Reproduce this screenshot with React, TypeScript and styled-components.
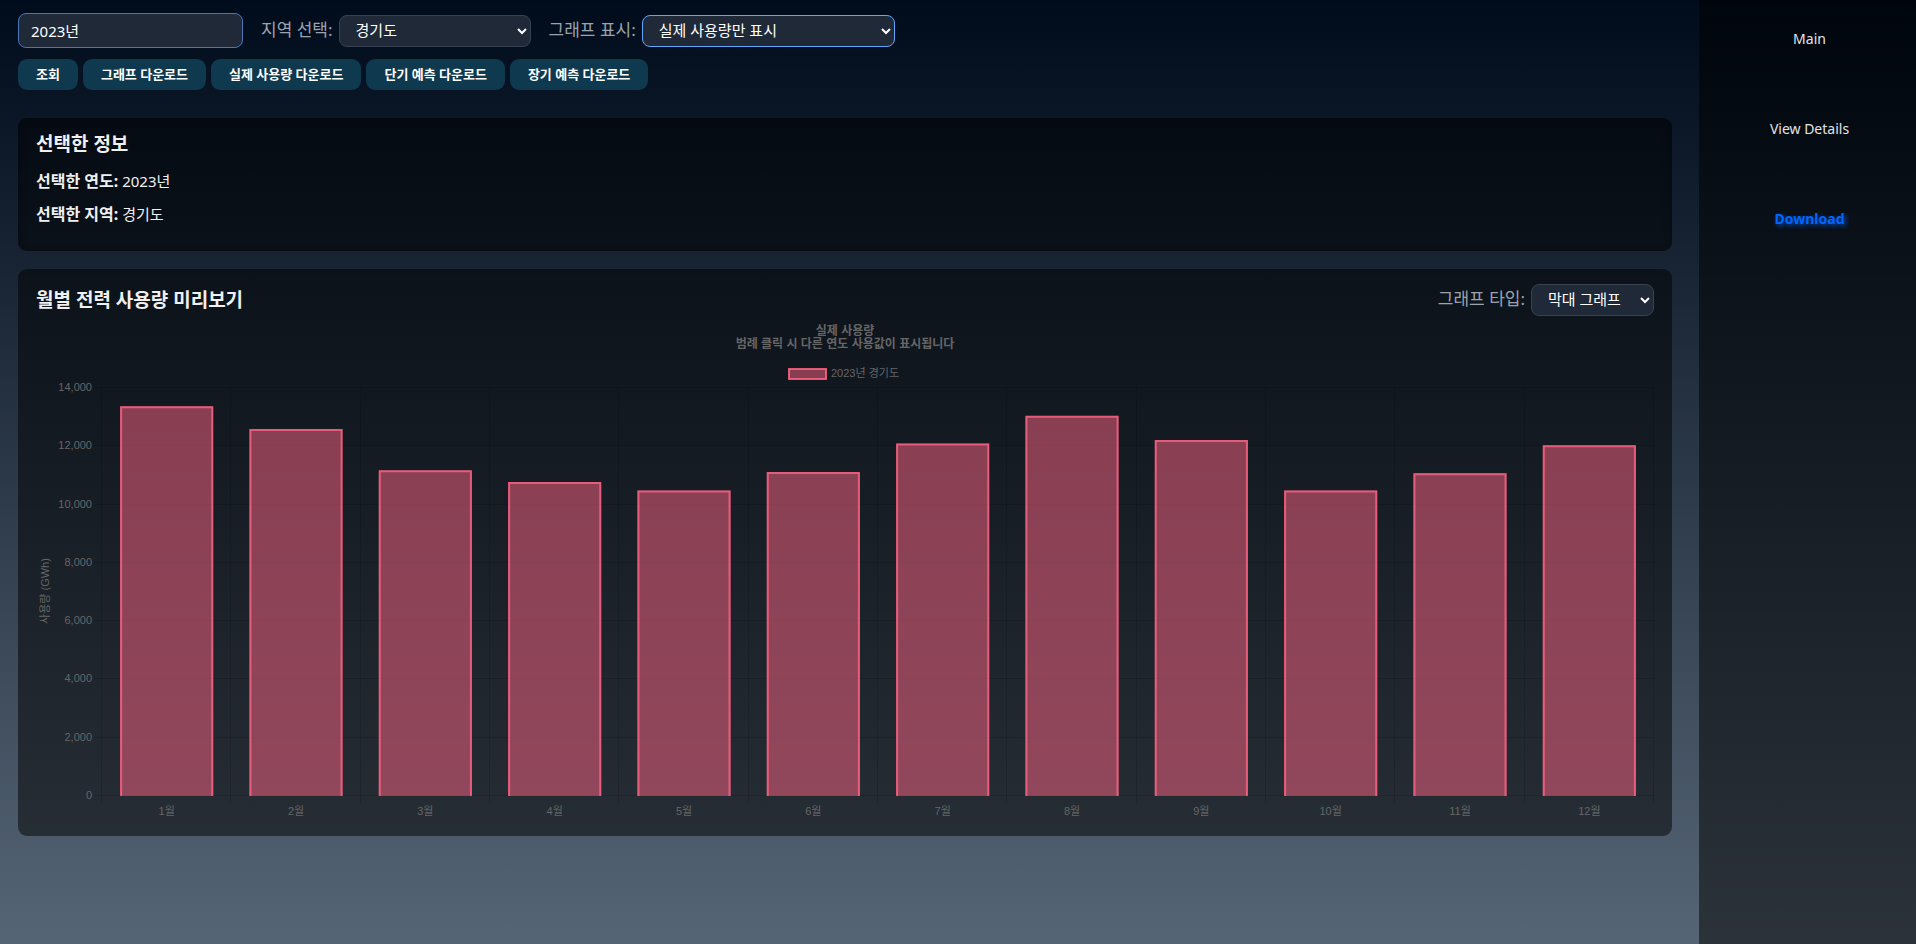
import React, { useLayoutEffect, useRef, useState } from 'react';
import styled, { createGlobalStyle } from 'styled-components';

const GlobalStyle = createGlobalStyle`
  * { box-sizing: border-box; }
  body {
    margin: 0;
    font-family: 'Noto Sans', 'Noto Sans CJK KR', sans-serif;
    font-size: 15px;
    color: #f0f0f0;
  }
`;

const Page = styled.div`
  display: flex;
  min-height: 100vh;
  background: linear-gradient(to bottom, #000b1b, #566575);
`;

const Content = styled.main`
  flex: 1;
  min-width: 0;
  padding: 13px 27px 18px 18px;
`;

const Sidebar = styled.nav`
  flex: 0 0 217px;
  display: flex;
  flex-direction: column;
  align-items: center;
  gap: 66px;
  padding: 27px 0 0 4px;
  background: rgba(0, 0, 0, 0.5);
`;

const NavLink = styled.a<{ $active?: boolean }>`
  font-size: 14px;
  line-height: 24px;
  text-decoration: none;
  color: ${(p) => (p.$active ? '#0066ff' : '#e4e4e4')};
  font-weight: ${(p) => (p.$active ? 700 : 400)};
  text-shadow: ${(p) => (p.$active ? '2px 2px 4px rgba(0, 102, 255, 0.7)' : 'none')};
`;

const Filters = styled.div`
  display: flex;
  align-items: center;
  gap: 18px;
  height: 35px;
`;

const YearInput = styled.input`
  width: 225px;
  height: 35px;
  padding: 0 12px;
  border: 1px solid #4a76b4;
  border-radius: 8px;
  background: #1f2937;
  color: #fff;
  font: inherit;
  outline: none;
`;

const Field = styled.div`
  display: flex;
  align-items: center;
  gap: 6px;
`;

const FieldLabel = styled.label`
  padding-bottom: 2px;
  font-size: 17px;
  line-height: 24px;
  color: #9ca3af;
`;

const SelectBox = styled.div<{ $width: number }>`
  position: relative;
  width: ${(p) => p.$width}px;
`;

const Select = styled.select<{ $focused?: boolean }>`
  display: block;
  appearance: none;
  width: 100%;
  height: 32px;
  padding: 0 16px 2px;
  border: 1px solid ${(p) => (p.$focused ? '#60a5fa' : '#374151')};
  border-radius: 8px;
  background: #1f2937;
  color: #fff;
  font: inherit;
  outline: none;
`;

const Arrow = styled.svg`
  position: absolute;
  right: 4px;
  top: 12px;
  width: 10px;
  height: 8px;
  pointer-events: none;
`;

const Actions = styled.div`
  display: flex;
  gap: 5px;
  margin-top: 11px;
`;

const ActionButton = styled.button`
  height: 31px;
  padding: 0 18px 2px;
  border: 0;
  border-radius: 9px;
  background: #0e394e;
  color: #fff;
  font-family: inherit;
  font-size: 13px;
  font-weight: 700;
`;

const Card = styled.section<{ $inset?: boolean }>`
  border-radius: 9px;
  background: rgba(0, 0, 0, 0.5);
  box-shadow: ${(p) => (p.$inset ? 'inset 0 0 8px rgba(0, 0, 0, 0.3)' : 'none')};
  padding: ${(p) => (p.$inset ? '12px 18px 25px' : '14px 18px 18px')};
  margin-top: ${(p) => (p.$inset ? 28 : 18)}px;
`;

const Title = styled.h2`
  margin: 0;
  font-size: 19px;
  line-height: 28px;
  font-weight: 700;
`;

const InfoList = styled.div`
  display: grid;
  gap: 9px;
  margin-top: 11px;
`;

const InfoLine = styled.p`
  margin: 0;
  line-height: 24px;

  strong { font-size: 16px; }
`;

const CardHeader = styled.div`
  display: flex;
  align-items: center;
  justify-content: space-between;
  height: 34px;
`;

const ChartArea = styled.div`
  margin-top: 5px;
`;

const ChartSvg = styled.svg`
  display: block;
  width: 100%;
  height: 496px;
  font-family: 'Liberation Sans', 'Noto Sans CJK KR', sans-serif;
  font-size: 11px;
  fill: #666;
`;

type PickerProps = { id: string; label: string; options: string[]; width: number; focused?: boolean };

function Picker({ id, label, options, width, focused }: PickerProps) {
  return (
    <Field>
      <FieldLabel htmlFor={id}>{label}</FieldLabel>
      <SelectBox $width={width}>
        <Select id={id} $focused={focused}>
          {options.map((o) => <option key={o}>{o}</option>)}
        </Select>
        <Arrow viewBox="0 0 10 8" aria-hidden="true">
          <path d="M1 2 L5 6 L9 2" fill="none" stroke="#fff" strokeWidth="2" />
        </Arrow>
      </SelectBox>
    </Field>
  );
}

const usage = [13340, 12560, 11140, 10740, 10450, 11080, 12060, 13010, 12180, 10450, 11040, 12000];
const ticks = [0, 2000, 4000, 6000, 8000, 10000, 12000, 14000];

function UsageChart() {
  const ref = useRef<HTMLDivElement>(null);
  const [width, setWidth] = useState(1200);

  useLayoutEffect(() => {
    const el = ref.current;
    if (!el) return;
    const measure = () => setWidth(el.clientWidth);
    measure();
    const observer = new ResizeObserver(measure);
    observer.observe(el);
    return () => observer.disconnect();
  }, []);

  const left = 66;
  const top = 65;
  const bottom = 473;
  const step = (width - left) / usage.length;
  const barWidth = step * 0.72;
  const mid = width / 2;
  const y = (v: number) => bottom - (v / 14000) * (bottom - top);

  return (
    <ChartArea ref={ref}>
      <ChartSvg role="img" aria-label="월별 전력 사용량">
        <g stroke="rgba(0,0,0,0.12)">
          {ticks.map((t) => (
            <line key={t} x1={left - 8} x2={width} y1={Math.round(y(t)) + 0.5} y2={Math.round(y(t)) + 0.5} />
          ))}
          {[...usage, 0].map((_, i) => {
            const x = Math.round(left + i * step) - 0.5;
            return <line key={i} x1={x} x2={x} y1={top} y2={bottom + 8} />;
          })}
        </g>
        <g textAnchor="middle" fontWeight="700" fontSize="12">
          <text x={mid} y={13}>실제 사용량</text>
          <text x={mid} y={26}>범례 클릭 시 다른 연도 사용값이 표시됩니다</text>
        </g>
        <rect x={mid - 56} y={47} width={37} height={10} fill="rgba(255,99,132,0.5)" stroke="#ff6384" strokeOpacity="0.85" strokeWidth="2" />
        <text x={mid - 14} y={55}>2023년 경기도</text>
        {ticks.map((t) => (
          <text key={t} x={left - 10} y={y(t) + 4} textAnchor="end">{t.toLocaleString('en-US')}</text>
        ))}
        <text transform={`translate(13 ${(top + bottom) / 2}) rotate(-90)`} textAnchor="middle">사용량 (GWh)</text>
        {usage.map((v, i) => {
          const cx = left + (i + 0.5) * step;
          const x0 = cx - barWidth / 2;
          const x1 = cx + barWidth / 2;
          return (
            <g key={i}>
              <rect x={x0} y={y(v)} width={barWidth} height={bottom - y(v) + 1} fill="rgba(255,99,132,0.5)" />
              <path d={`M${x0 + 1} ${bottom + 1} V${y(v) + 1} H${x1 - 1} V${bottom + 1}`} fill="none" stroke="#ff6384" strokeOpacity="0.8" strokeWidth="2" />
              <text x={cx} y={bottom + 20} textAnchor="middle">{i + 1}월</text>
            </g>
          );
        })}
      </ChartSvg>
    </ChartArea>
  );
}

export default function App() {
  return (
    <>
      <GlobalStyle />
      <Page>
        <Content>
          <Filters>
            <YearInput aria-label="연도" defaultValue="2023년" />
            <Picker id="region" label="지역 선택:" options={['경기도']} width={192} />
            <Picker id="display" label="그래프 표시:" options={['실제 사용량만 표시']} width={253} focused />
          </Filters>
          <Actions>
            {['조회', '그래프 다운로드', '실제 사용량 다운로드', '단기 예측 다운로드', '장기 예측 다운로드'].map((t) => (
              <ActionButton key={t} type="button">{t}</ActionButton>
            ))}
          </Actions>
          <Card $inset>
            <Title>선택한 정보</Title>
            <InfoList>
              <InfoLine><strong>선택한 연도:</strong> 2023년</InfoLine>
              <InfoLine><strong>선택한 지역:</strong> 경기도</InfoLine>
            </InfoList>
          </Card>
          <Card>
            <CardHeader>
              <Title>월별 전력 사용량 미리보기</Title>
              <Picker id="type" label="그래프 타입:" options={['막대 그래프']} width={123} />
            </CardHeader>
            <UsageChart />
          </Card>
        </Content>
        <Sidebar>
          <NavLink href="#main">Main</NavLink>
          <NavLink href="#details">View Details</NavLink>
          <NavLink href="#download" $active>Download</NavLink>
        </Sidebar>
      </Page>
    </>
  );
}
